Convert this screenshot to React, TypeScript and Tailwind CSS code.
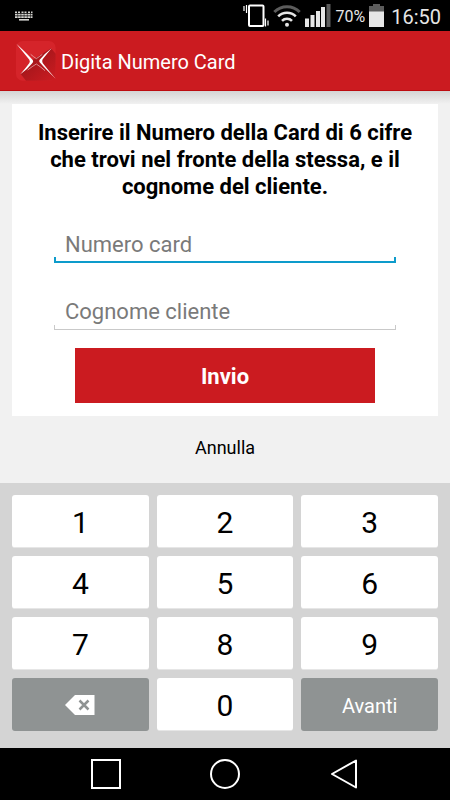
import { useState } from "react";

function KeyboardIcon() {
  return (
    <svg width="18" height="10" viewBox="0 0 18 10" fill="none" stroke="#d4d4d0" aria-hidden="true">
      <path d="M0 1.2h17.5" strokeWidth="1.6" strokeDasharray="2 1 2 1.5" />
      <path d="M0 3.7h17.5M0 6.2h17.5" strokeWidth="1.8" strokeDasharray="2.6 .5" />
      <path d="M4 8.8h10" strokeWidth="1.6" />
    </svg>
  );
}

function VibrateIcon() {
  return (
    <svg width="26" height="23" viewBox="0 0 26 23" fill="none" stroke="#fff" aria-hidden="true">
      <rect x="6" y="1.5" width="14.5" height="20.5" rx="1" strokeWidth="2" />
      <path d="M3.5 1v8M22.5 14.5v8" strokeWidth="1.2" />
      <path d="M1 2v5M25 16.5v5" strokeWidth="1.2" />
    </svg>
  );
}

function WifiIcon() {
  return (
    <svg width="28" height="22" viewBox="0 0 28 22" fill="none" aria-hidden="true">
      <path d="M1.3 7a18 18 0 0 1 25.4 0" stroke="#5c5c5c" strokeWidth="3" />
      <path d="M5.2 11.4a12.5 12.5 0 0 1 17.6 0M9 15.8a7.1 7.1 0 0 1 10 0" stroke="#e6e6e6" strokeWidth="2.6" />
      <circle cx="14" cy="19.8" r="2" fill="#e6e6e6" />
    </svg>
  );
}

function SignalIcon() {
  return (
    <svg width="26" height="23" viewBox="0 0 26 23" fill="#e6e6e6" aria-hidden="true">
      <rect x="0" y="14.5" width="4" height="8.5" />
      <rect x="5.5" y="11" width="4" height="12" />
      <rect x="11" y="7" width="4" height="16" />
      <rect x="16" y="3" width="4" height="20" />
      <rect x="21.5" y="0" width="4" height="23" fill="#5c5c5c" />
    </svg>
  );
}

function BatteryIcon() {
  return (
    <svg width="15" height="23" viewBox="0 0 15 23" aria-hidden="true">
      <path d="M4 0h7v2h4v6H0V2h4z" fill="#5c5c5c" />
      <rect x="0" y="7.5" width="15" height="15.5" fill="#e6e6e6" />
    </svg>
  );
}

function Logo() {
  return (
    <svg width="40" height="40" viewBox="0 0 120 120" aria-hidden="true">
      <defs>
        <linearGradient id="logoShade" x1="0.3" y1="0.3" x2="0.9" y2="0.9">
          <stop offset="0" stopColor="#a3161b" />
          <stop offset="1" stopColor="#c71b20" />
        </linearGradient>
      </defs>
      <rect width="119" height="119" rx="20" fill="#d5242a" />
      <path d="M45 60 105 22l14 16v62a19 19 0 0 1-19 19H30L14 99z" fill="url(#logoShade)" />
      <path d="M1 8Q34 38 50 57Q53 61 50 65Q36 83 13 100Q29 81 40 66Q43 61 40 56Q22 34 1 8z" fill="#fff" />
      <path d="M107 22Q85 39 71 56Q68 60 71 64Q88 84 119 113Q99 91 80 66Q77 60 80 55Q91 41 107 22z" fill="#fff" />
      <path d="M44 40Q52 47 61 53Q70 47 79 40M35 87Q49 76 61 69Q75 78 87 89" fill="none" stroke="#f0c4c6" strokeWidth="2" />
    </svg>
  );
}

function StatusBar() {
  return (
    <div className="flex h-[31px] items-center bg-black pr-[9px] pl-[15px] text-[#e6e6e6]">
      <KeyboardIcon />
      <div className="ml-auto flex items-center gap-1">
        <VibrateIcon />
        <WifiIcon />
        <SignalIcon />
        <span className="pt-0.5 text-base">70%</span>
        <BatteryIcon />
        <span className="ml-[3px] pt-0.5 text-xl">16:50</span>
      </div>
    </div>
  );
}

type FieldProps = {
  label: string;
  active?: boolean;
  inputMode?: "numeric" | "text";
  value: string;
  onChange: (value: string) => void;
};

function Field({ label, active, inputMode, value, onChange }: FieldProps) {
  return (
    <div className="relative">
      <input
        type="text"
        aria-label={label}
        inputMode={inputMode}
        placeholder={label}
        value={value}
        onChange={(e) => onChange(e.target.value)}
        className="block h-[38px] w-full bg-transparent px-[11px] text-[22px] text-black outline-none placeholder:text-[#7a7a7a]"
      />
      <span
        className={
          active
            ? "pointer-events-none absolute inset-x-0 bottom-0 h-[6px] border-x-2 border-b-2 border-[#0d9bcb]"
            : "pointer-events-none absolute inset-x-0 bottom-0 h-[5px] border-x border-b border-[#c9c9c9]"
        }
      />
    </div>
  );
}

function BackspaceIcon() {
  return (
    <svg width="30" height="20" viewBox="0 0 30 20" aria-hidden="true">
      <path d="M0 10 10 0h19.5v20H10z" fill="#fff" />
      <path d="m14.500 5.500 9 9m0-9-9 9" stroke="#8f9393" strokeWidth="2.5" />
    </svg>
  );
}

const digits = ["1", "2", "3", "4", "5", "6", "7", "8", "9"];

export default function App() {
  const [card, setCard] = useState("");
  const [surname, setSurname] = useState("");

  const press = (digit: string) => setCard(card + digit);

  return (
    <div className="flex min-h-screen flex-col bg-[#f1f1f1] font-['Roboto',sans-serif]">
      <StatusBar />

      <header className="flex h-[60px] items-center gap-[5px] border-b border-[#bd0b10] bg-[#cb1b20] px-4 text-white">
        <Logo />
        <h1 className="pt-0.5 text-xl">Digita Numero Card</h1>
      </header>

      <main className="flex flex-1 flex-col bg-linear-to-b from-[#d4d4d4] to-[#f1f1f1] to-[13px] px-3 pt-[13px]">
        <form className="bg-white px-[42px] pt-[15px] pb-[13px]" onSubmit={(e) => e.preventDefault()}>
          <p className="-mx-6 text-center text-[22px] leading-[27px] font-bold text-black">
            Inserire il Numero della Card di 6 cifre che trovi nel fronte della stessa, e il cognome del cliente.
          </p>
          <div className="mt-[25px] flex flex-col gap-[29px]">
            <Field label="Numero card" active inputMode="numeric" value={card} onChange={setCard} />
            <Field label="Cognome cliente" value={surname} onChange={setSurname} />
          </div>
          <div className="mt-[18px] px-[21px]">
            <button type="submit" className="h-[55px] w-full bg-[#cb1b20] pt-0.5 text-[22px] font-bold text-white">
              Invio
            </button>
          </div>
        </form>
        <div className="flex flex-1 items-center justify-center pb-1">
          <button type="button" className="px-4 text-lg text-black">
            Annulla
          </button>
        </div>
      </main>

      {/* numeric keyboard */}
      <div className="grid grid-cols-3 gap-2 bg-[#d4d4d4] px-3 pt-3 pb-[17px] text-3xl text-black">
        {digits.map((digit) => (
          <button
            key={digit}
            type="button"
            onClick={() => press(digit)}
            className="h-[53px] rounded-[3px] border-b border-[#e6e6e6] bg-white pt-1"
          >
            {digit}
          </button>
        ))}
        <button
          type="button"
          aria-label="Cancella"
          onClick={() => setCard(card.slice(0, -1))}
          className="flex h-[53px] items-center justify-center rounded-[3px] bg-[#8f9393]"
        >
          <BackspaceIcon />
        </button>
        <button
          type="button"
          onClick={() => press("0")}
          className="h-[53px] rounded-[3px] border-b border-[#e6e6e6] bg-white pt-1"
        >
          0
        </button>
        <button type="button" className="h-[53px] rounded-[3px] bg-[#8f9393] pt-0.5 text-xl text-white">
          Avanti
        </button>
      </div>

      <nav className="flex h-[52px] items-center justify-center gap-[89px] bg-black text-white">
        <button type="button" aria-label="Recenti">
          <svg width="30" height="30" viewBox="0 0 30 30" fill="none" stroke="currentColor" strokeWidth="2">
            <rect x="1" y="1" width="28" height="28" />
          </svg>
        </button>
        <button type="button" aria-label="Home">
          <svg width="30" height="30" viewBox="0 0 30 30" fill="none" stroke="currentColor" strokeWidth="2">
            <circle cx="15" cy="15" r="14" />
          </svg>
        </button>
        <button type="button" aria-label="Indietro">
          <svg width="30" height="30" viewBox="0 0 30 30" fill="none" stroke="currentColor" strokeWidth="2">
            <path d="M27 1.5v27L3 15z" strokeLinejoin="round" />
          </svg>
        </button>
      </nav>
    </div>
  );
}
